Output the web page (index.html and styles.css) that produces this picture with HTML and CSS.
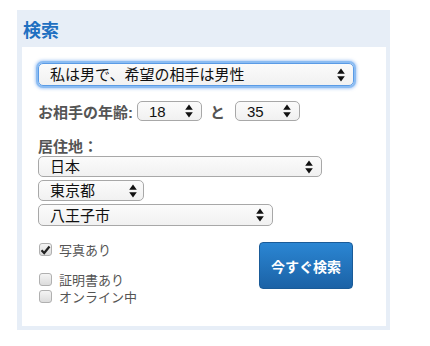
FILE: index.html
```html
<!DOCTYPE html>
<html lang="ja">
<head>
  <meta charset="UTF-8">
  <meta name="viewport" content="width=device-width, initial-scale=1.0">
  <title>検索</title>
  <link rel="stylesheet" href="styles.css">
</head>
<body>
  <div class="panel">
    <header>
      <h2>検索</h2>
    </header>

    <div class="box">
      <div class="select select-focus select-wide">
        <span>私は男で、希望の相手は男性</span>
        <svg class="arrow" width="8" height="14" viewBox="0 0 8 14"><path d="M4 0.5 L7.8 5.8 L0.2 5.8 Z M4 13.5 L7.8 8.2 L0.2 8.2 Z" fill="#111"/></svg>
      </div>

      <div class="age-row">
        <span class="label">お相手の年齢:</span>
        <div class="select select-age">
          <span>18</span>
          <svg class="arrow" width="8" height="14" viewBox="0 0 8 14"><path d="M4 0.5 L7.8 5.8 L0.2 5.8 Z M4 13.5 L7.8 8.2 L0.2 8.2 Z" fill="#111"/></svg>
        </div>
        <span class="label to">と</span>
        <div class="select select-age">
          <span>35</span>
          <svg class="arrow" width="8" height="14" viewBox="0 0 8 14"><path d="M4 0.5 L7.8 5.8 L0.2 5.8 Z M4 13.5 L7.8 8.2 L0.2 8.2 Z" fill="#111"/></svg>
        </div>
      </div>

      <div class="label place-label">居住地：</div>
      <div class="place">
        <div class="select select-country">
          <span>日本</span>
          <svg class="arrow" width="8" height="14" viewBox="0 0 8 14"><path d="M4 0.5 L7.8 5.8 L0.2 5.8 Z M4 13.5 L7.8 8.2 L0.2 8.2 Z" fill="#111"/></svg>
        </div>
        <div class="select select-pref">
          <span>東京都</span>
          <svg class="arrow" width="8" height="14" viewBox="0 0 8 14"><path d="M4 0.5 L7.8 5.8 L0.2 5.8 Z M4 13.5 L7.8 8.2 L0.2 8.2 Z" fill="#111"/></svg>
        </div>
        <div class="select select-city">
          <span>八王子市</span>
          <svg class="arrow" width="8" height="14" viewBox="0 0 8 14"><path d="M4 0.5 L7.8 5.8 L0.2 5.8 Z M4 13.5 L7.8 8.2 L0.2 8.2 Z" fill="#111"/></svg>
        </div>
      </div>

      <div class="bottom">
        <div class="checks">
          <label class="check check-photo">
            <span class="box-mark checked">
              <svg width="11" height="10" viewBox="0 0 11 10"><path d="M1.5 5.2 L4.2 8 L9.5 1.5" stroke="#222" stroke-width="2.2" fill="none"/></svg>
            </span>
            写真あり
          </label>
          <label class="check check-cert">
            <span class="box-mark"></span>
            証明書あり
          </label>
          <label class="check">
            <span class="box-mark"></span>
            オンライン中
          </label>
        </div>
        <button class="search-btn">今すぐ検索</button>
      </div>
    </div>
  </div>
</body>
</html>
```

FILE: styles.css
```css
body {
  margin: 0;
  background: #fff;
  font-family: "Liberation Sans", "Noto Sans CJK JP", sans-serif;
  color: #333;
}
.panel {
  width: 364px;
  margin: 10px 0 0 17px;
  padding: 0 4px 4px 5px;
  background: #e7eef7;
}
header {
  height: 37px;
  display: flex;
  align-items: center;
}
h2 {
  margin: 0 0 0 1px;
  font-size: 18px;
  font-weight: bold;
  color: #1f70c1;
}
.box {
  background: #fff;
  height: 263px;
  padding: 16px 33px 0 16px;
}
.select {
  box-sizing: border-box;
  display: flex;
  align-items: center;
  justify-content: space-between;
  height: 21px;
  padding: 0 8px 0 11px;
  border: 1px solid #a8a8a8;
  border-radius: 5px;
  background: linear-gradient(#fbfbfb, #f1f1f1);
  font-size: 15px;
  color: #111;
}
.select span {
  line-height: 1;
}
.arrow {
  flex: none;
}
.select-wide {
  width: 316px;
  height: 23px;
}
.select-focus {
  border-color: #5a9be6;
  box-shadow: 0 0 0 2px #8bbcf2, 0 0 3px 3px rgba(100, 160, 240, 0.5);
}
.age-row {
  display: flex;
  align-items: center;
  margin-top: 15px;
  height: 20px;
}
.label {
  font-size: 15px;
  font-weight: bold;
  color: #555;
}
.select-age {
  width: 65px;
  height: 20px;
  margin-left: 4px;
}
.to {
  margin: 0 10px 0 8px;
}
.to + .select-age {
  margin-left: 0;
}
.place-label {
  margin-top: 17px;
  height: 18px;
  line-height: 18px;
}
.place {
  display: flex;
  flex-direction: column;
  gap: 3px;
}
.select-country {
  width: 284px;
}
.select-pref {
  width: 106px;
  padding-right: 6px;
}
.select-city {
  width: 235px;
  height: 22px;
}
.bottom {
  display: flex;
  justify-content: space-between;
  margin-top: 15px;
}
.checks {
  display: flex;
  flex-direction: column;
}
.check {
  display: flex;
  align-items: center;
  gap: 7px;
  height: 17px;
  margin-left: 1px;
  font-size: 13px;
  color: #555;
}
.check-photo {
  margin-bottom: 13px;
}
.box-mark {
  box-sizing: border-box;
  display: flex;
  align-items: center;
  justify-content: center;
  width: 13px;
  height: 13px;
  border: 1px solid #b0b0b0;
  border-radius: 3px;
  background: linear-gradient(#f4f4f4, #dcdcdc);
}
.search-btn {
  width: 94px;
  height: 47px;
  margin-top: 1px;
  border: 1px solid #1a5b98;
  border-radius: 4px;
  background: linear-gradient(#2b86d3, #1b62a6);
  color: #fff;
  font-family: "Liberation Sans", "Noto Sans CJK JP", sans-serif;
  font-size: 14px;
  font-weight: bold;
  cursor: pointer;
}
```
